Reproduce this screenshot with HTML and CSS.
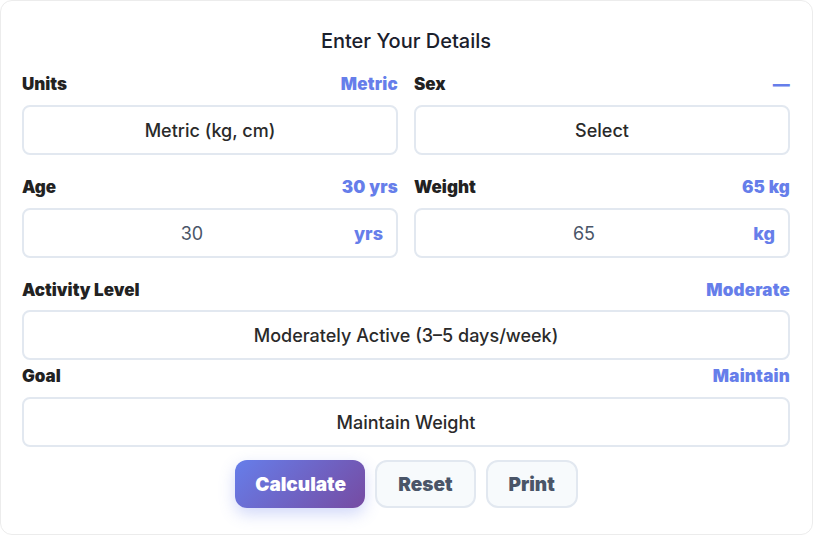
FILE: index.html
```html
<!DOCTYPE html>
<html lang="en">
<head>
  <meta charset="UTF-8">
  <meta name="viewport" content="width=device-width, initial-scale=1.0">
  <title>Calorie Calculator</title>
  <link rel="stylesheet" href="styles.css">
</head>
<body>
  <div class="card">
    <h2 class="title">Enter Your Details</h2>

    <!-- Units / Sex -->
    <div class="row">
      <div class="field">
        <div class="label-row"><span class="label">Units</span><span class="value">Metric</span></div>
        <div class="box">Metric (kg, cm)</div>
      </div>
      <div class="field">
        <div class="label-row"><span class="label">Sex</span><span class="value">—</span></div>
        <div class="box">Select</div>
      </div>
    </div>

    <!-- Age / Weight -->
    <div class="row">
      <div class="field">
        <div class="label-row"><span class="label">Age</span><span class="value">30 yrs</span></div>
        <div class="box input-box"><span class="num">30</span><span class="unit">yrs</span></div>
      </div>
      <div class="field">
        <div class="label-row"><span class="label">Weight</span><span class="value">65 kg</span></div>
        <div class="box input-box"><span class="num">65</span><span class="unit">kg</span></div>
      </div>
    </div>

    <div class="field single">
      <div class="label-row"><span class="label">Activity Level</span><span class="value">Moderate</span></div>
      <div class="box">Moderately Active (3–5 days/week)</div>
    </div>

    <div class="field single goal">
      <div class="label-row"><span class="label">Goal</span><span class="value">Maintain</span></div>
      <div class="box">Maintain Weight</div>
    </div>

    <div class="actions">
      <button class="btn primary">Calculate</button>
      <button class="btn secondary">Reset</button>
      <button class="btn secondary">Print</button>
    </div>
  </div>
</body>
</html>
```

FILE: styles.css
```css
body {
  margin: 0;
  background: #ffffff;
  font-family: Inter, "Noto Sans", sans-serif;
  color: #2d3748;
}
.card {
  box-sizing: border-box;
  height: 535px;
  background: #fff;
  border: 1px solid #ececec;
  border-radius: 12px;
  padding: 28px 22px 0 21px;
}
.title {
  margin: 0 0 21px 0;
  text-align: center;
  font-size: 20px;
  font-weight: 500;
  line-height: 24px;
  color: #1a202c;
}
.row {
  display: grid;
  grid-template-columns: 1fr 1fr;
  gap: 16px;
  margin-bottom: 22px;
}
.label-row {
  display: flex;
  justify-content: space-between;
  align-items: center;
  height: 20px;
  margin-bottom: 11px;
}
.label {
  font-size: 17px;
  font-weight: 900;
  color: #222;
}
.value {
  font-size: 17px;
  font-weight: 900;
  color: #667eea;
  letter-spacing: 0.2px;
}
.box {
  box-sizing: border-box;
  height: 50px;
  border: 2px solid #e2e8f0;
  border-radius: 8px;
  display: flex;
  align-items: center;
  justify-content: center;
  font-size: 18px;
  font-weight: 500;
  color: #2a2a2a;
}
.input-box {
  position: relative;
}
.input-box .num {
  font-weight: 400;
  color: #4a5568;
  margin-right: 36px;
}
.input-box .unit {
  position: absolute;
  right: 13px;
  top: 13px;
  font-weight: 800;
  color: #667eea;
}
.single {
  margin-bottom: 6px;
}
.single .label-row {
  margin-bottom: 10px;
}
.goal {
  margin-bottom: 13px;
}
.goal .label-row {
  margin-bottom: 11px;
}
.actions {
  display: flex;
  justify-content: center;
  gap: 10px;
  margin-left: 1px;
}
.btn {
  height: 48px;
  border-radius: 12px;
  font-family: Inter, "Noto Sans", sans-serif;
  font-size: 19px;
  font-weight: 900;
  cursor: pointer;
  padding: 0 20px;
}
.primary {
  border: none;
  color: #fff;
  width: 130px;
  background: linear-gradient(135deg, #667eea 0%, #764ba2 100%);
  box-shadow: 0 6px 16px rgba(102, 126, 234, 0.3);
}
.secondary {
  background: #f7fafc;
  border: 2px solid #e2e8f0;
  color: #4a5568;
  padding: 0 21px;
}
```
